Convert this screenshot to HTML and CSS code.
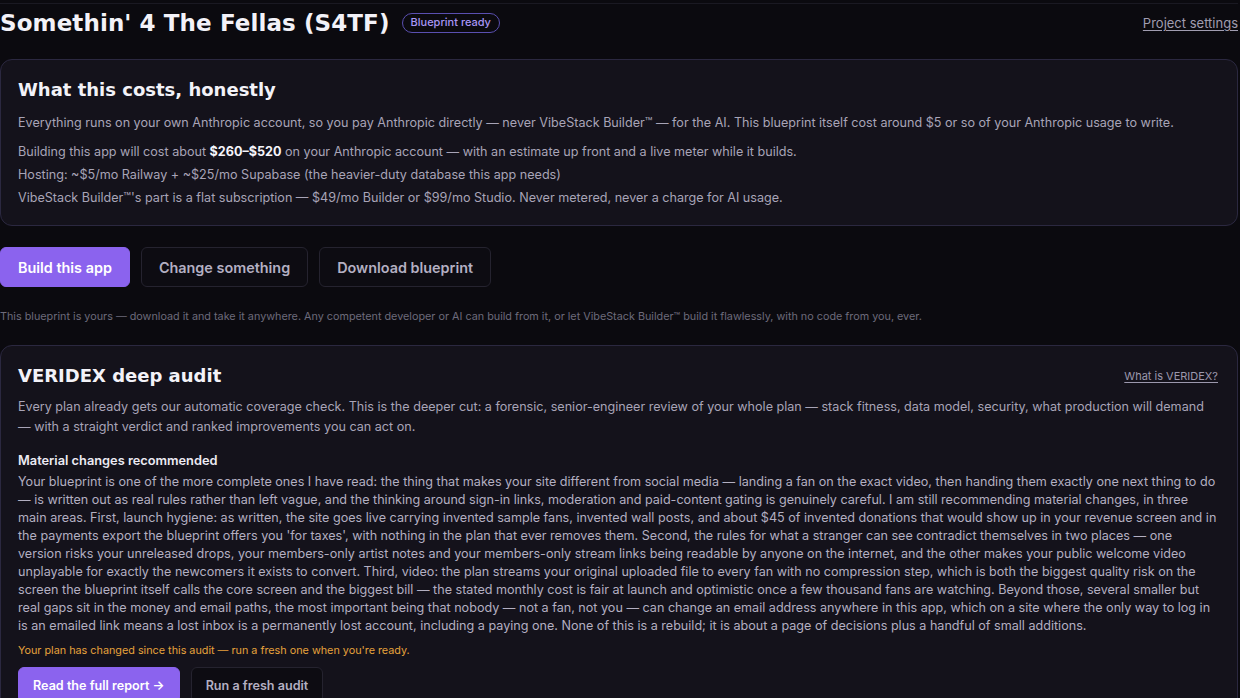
FILE: index.html
```html
<!DOCTYPE html>
<html lang="en">
<head>
<meta charset="utf-8">
<title>Somethin' 4 The Fellas (S4TF)</title>
<link rel="stylesheet" href="styles.css">
</head>
<body>
<div class="page">
  <header class="top">
    <div class="title-wrap">
      <h1 class="title">Somethin' 4 The Fellas (S4TF)</h1>
      <span class="badge">Blueprint ready</span>
    </div>
    <a class="link" href="#">Project settings</a>
  </header>

  <section class="card costs">
    <h2 class="card-title">What this costs, honestly</h2>
    <p class="lead">Everything runs on your own Anthropic account, so you pay Anthropic directly — never VibeStack Builder™ — for the AI. This blueprint itself cost around $5 or so of your Anthropic usage to write.</p>
    <ul class="cost-list">
      <li>Building this app will cost about <strong>$260–$520</strong> on your Anthropic account — with an estimate up front and a live meter while it builds.</li>
      <li>Hosting: ~$5/mo Railway + ~$25/mo Supabase (the heavier-duty database this app needs)</li>
      <li>VibeStack Builder™'s part is a flat subscription — $49/mo Builder or $99/mo Studio. Never metered, never a charge for AI usage.</li>
    </ul>
  </section>

  <div class="actions">
    <button class="btn btn-primary">Build this app</button>
    <button class="btn btn-ghost">Change something</button>
    <button class="btn btn-ghost">Download blueprint</button>
  </div>
  <p class="footnote">This blueprint is yours — download it and take it anywhere. Any competent developer or AI can build from it, or let VibeStack Builder™ build it flawlessly, with no code from you, ever.</p>

  <section class="card audit">
    <div class="card-head">
      <h2 class="card-title">VERIDEX deep audit</h2>
      <a class="link link-small" href="#">What is VERIDEX?</a>
    </div>
    <p class="lead lead-audit">Every plan already gets our automatic coverage check. This is the deeper cut: a forensic, senior-engineer review of your whole plan — stack fitness, data model, security, what production will demand — with a straight verdict and ranked improvements you can act on.</p>
    <h3 class="verdict">Material changes recommended</h3>
    <p class="summary">Your blueprint is one of the more complete ones I have read: the thing that makes your site different from social media — landing a fan on the exact video, then handing them exactly one next thing to do — is written out as real rules rather than left vague, and the thinking around sign-in links, moderation and paid-content gating is genuinely careful. I am still recommending material changes, in three main areas. First, launch hygiene: as written, the site goes live carrying invented sample fans, invented wall posts, and about $45 of invented donations that would show up in your revenue screen and in the payments export the blueprint offers you 'for taxes', with nothing in the plan that ever removes them. Second, the rules for what a stranger can see contradict themselves in two places — one version risks your unreleased drops, your members-only artist notes and your members-only stream links being readable by anyone on the internet, and the other makes your public welcome video unplayable for exactly the newcomers it exists to convert. Third, video: the plan streams your original uploaded file to every fan with no compression step, which is both the biggest quality risk on the screen the blueprint itself calls the core screen and the biggest bill — the stated monthly cost is fair at launch and optimistic once a few thousand fans are watching. Beyond those, several smaller but real gaps sit in the money and email paths, the most important being that nobody — not a fan, not you — can change an email address anywhere in this app, which on a site where the only way to log in is an emailed link means a lost inbox is a permanently lost account, including a paying one. None of this is a rebuild; it is about a page of decisions plus a handful of small additions.</p>
    <p class="warning">Your plan has changed since this audit — run a fresh one when you're ready.</p>
    <div class="actions actions-small">
      <button class="btn btn-primary">Read the full report →</button>
      <button class="btn btn-ghost">Run a fresh audit</button>
    </div>
  </section>
</div>
</body>
</html>
```

FILE: styles.css
```css
* { box-sizing: border-box; }

html, body {
  margin: 0;
  background: #0b0a0f;
  color: #e8e6ef;
  font-family: Inter, "Noto Sans", sans-serif;
}

.page {
  width: 1238px;
  border-top: 1px solid #1a1922;
  margin-top: 3px;
  display: flex;
  flex-direction: column;
}

.top {
  display: flex;
  align-items: center;
  justify-content: space-between;
  height: 38px;
  margin-bottom: 17px;
}

.title-wrap {
  display: flex;
  align-items: center;
  gap: 12px;
}

/* display headings use a wide heavy face */
.title,
.card-title {
  font-family: "DejaVu Sans", Inter, sans-serif;
  font-weight: 700;
  color: #f3f2f8;
  margin: 0;
}

.title {
  font-size: 23px;
  letter-spacing: 0.1px;
}

.badge {
  font-size: 11px;
  font-weight: 500;
  color: #a996f5;
  border: 1px solid #5a4fb0;
  border-radius: 999px;
  padding: 2px 8px 3px;
  line-height: 13px;
}

.link {
  color: #a19db0;
  font-size: 13px;
  text-decoration: underline;
  text-underline-offset: 2px;
}

.link-small { font-size: 11px; color: #9c98ad; }

.card {
  background: #14121b;
  border: 1px solid #2b2840;
  border-radius: 12px;
  padding: 17px 19px 17px 17px;
}

.costs { padding-bottom: 16px; }

.card-title {
  font-size: 18px;
  letter-spacing: 0;
  line-height: 26px;
}

.lead {
  margin: 11px 0 0;
  font-size: 12.6px;
  line-height: 18px;
  color: #a8a4b7;
}

.cost-list {
  list-style: none;
  margin: 8px 0 0;
  padding: 0;
  font-size: 12.6px;
  line-height: 23px;
  color: #a8a4b7;
}

.cost-list strong { color: #f5f4fa; font-weight: 700; }

.actions {
  display: flex;
  gap: 11px;
  margin-top: 21px;
}

.btn {
  font-family: Inter, "Noto Sans", sans-serif;
  font-size: 14.4px;
  font-weight: 600;
  height: 40px;
  padding: 0 17px;
  border-radius: 6px;
  cursor: pointer;
}

.btn-primary {
  background: #8b63ee;
  color: #ffffff;
  border: 1px solid #8b63ee;
}

.btn-ghost {
  background: #0d0c12;
  color: #b4b0c2;
  border: 1px solid #25232f;
}

.footnote {
  margin: 23px 0 22px;
  font-size: 10.8px;
  color: #6d6a7b;
}

.card-head {
  display: flex;
  align-items: center;
  justify-content: space-between;
}

.lead-audit {
  margin-top: 8px;
  line-height: 20px;
}

.verdict {
  margin: 15px 0 0;
  font-size: 12.8px;
  font-weight: 600;
  color: #eceaf3;
  line-height: 18px;
}

.summary {
  margin: 3px 0 0;
  font-size: 12.6px;
  line-height: 18px;
  color: #b3afc1;
}

.warning {
  margin: 9px 0 0;
  font-size: 10.8px;
  color: #e6a23c;
}

.actions-small { margin-top: 10px; gap: 11px; }
.actions-small .btn { height: 36px; padding: 0 14px; font-size: 12.6px; }
```
